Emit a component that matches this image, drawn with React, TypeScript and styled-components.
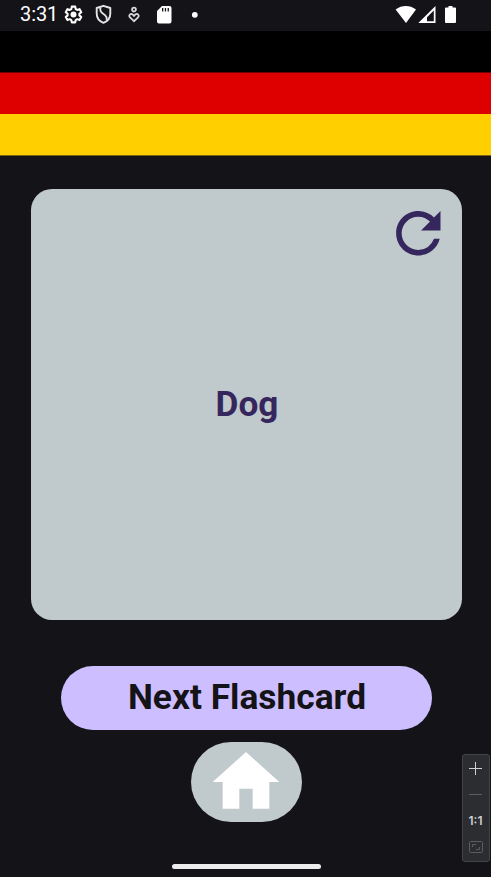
import React from "react";
import styled, { createGlobalStyle } from "styled-components";

const GlobalStyle = createGlobalStyle`
  * { box-sizing: border-box; }
  body { margin: 0; background: #141318; font-family: Roboto, sans-serif; }
  button { border: 0; padding: 0; font: inherit; }
  svg { display: block; flex: none; }
`;

const Screen = styled.main`
  position: relative;
  width: 491px;
  height: 877px;
  overflow: hidden;
  display: flex;
  flex-direction: column;
  align-items: center;
  background: #141318;
`;

const StatusBar = styled.header`
  width: 100%;
  height: 31px;
  padding: 0 34px 2px 20px;
  display: flex;
  align-items: center;
  color: #fff;
`;

const Clock = styled.time`
  width: 43px;
  font-size: 20px;
  line-height: 29px;
  letter-spacing: -0.1px;
`;

const Notifications = styled.div`
  display: grid;
  grid-template-columns: repeat(5, 30.4px);
  align-items: center;
`;

const Signals = styled.div`
  display: flex;
  align-items: center;
  margin-left: auto;
`;

const Flag = styled.div`
  width: 100%;
  height: 125px;
  flex: none;
  background: linear-gradient(#000 0 41.4px, #de0000 41.6px 83px, #ffcf00 83.2px 124.2px, #4e4112 124.6px);
`;

const Card = styled.section`
  position: relative;
  width: 431px;
  height: 431px;
  flex: none;
  margin: 33px 0 46px 2px;
  display: flex;
  align-items: center;
  justify-content: center;
  border-radius: 21px;
  background: #c0c9cb;
  color: #35275e;
`;

const Word = styled.h1`
  margin: 0;
  padding: 0 0 2px 1px;
  font-size: 35.2px;
  line-height: 42px;
  font-weight: 700;
`;

const FlipButton = styled.button`
  position: absolute;
  top: 10.5px;
  right: 10.5px;
  background: none;
  color: inherit;
`;

const NextButton = styled.button`
  width: 371px;
  height: 63.5px;
  flex: none;
  margin-left: 2px;
  padding: 0 0 2px 1px;
  border-radius: 32px;
  background: #cdbeff;
  color: #141318;
  font-size: 35.35px;
  line-height: 42px;
  font-weight: 700;
`;

const HomeButton = styled.button`
  width: 111px;
  height: 80px;
  flex: none;
  margin: 12.5px 0 0 2px;
  padding-right: 1px;
  display: flex;
  align-items: center;
  justify-content: center;
  border-radius: 40px;
  background: #c0c9cb;
  color: #fff;
`;

const GestureBar = styled.div`
  width: 149px;
  height: 5.5px;
  margin: auto 0 8px 2px;
  border-radius: 3px;
  background: #ececec;
`;

const ZoomPanel = styled.aside`
  position: absolute;
  right: 1px;
  top: 754px;
  width: 28px;
  height: 108px;
  padding-right: 1px;
  display: flex;
  flex-direction: column;
  align-items: center;
  border: 1px solid #434447;
  border-radius: 3px;
  background: #2b2d30;
  color: #ced0d6;
`;

const ZoomIn = styled.button`
  height: 27px;
  padding-bottom: 1px;
  background: none;
  color: inherit;
`;

const Divider = styled.div`
  width: 13px;
  height: 1px;
  margin: 12px 0 18px;
  background: #5b5d61;
`;

const Ratio = styled.span`
  font: 600 12px/16px Inter, sans-serif;
`;

const FitIcon = styled.svg`
  margin-top: 12px;
  color: #5b5d61;
`;

export default function App() {
  return (
    <>
      <GlobalStyle />
      <Screen>
        <StatusBar>
          <Clock>3:31</Clock>
          <Notifications>
            <svg width="21" height="21" viewBox="0 0 24 24" fill="none" stroke="currentColor" strokeWidth="2.3">
              <path d="M10 3h4l.5 2.8 1.7 1 2.7-1 2 3.5-2.2 1.8v1.9l2.2 1.8-2 3.5-2.7-1-1.7 1L14 21h-4l-.5-2.7-1.7-1-2.7 1-2-3.5L5.3 13v-1.9L3.1 9.3l2-3.5 2.7 1 1.7-1z" strokeLinejoin="round" />
              <circle cx="12" cy="12" r="3.4" fill="currentColor" stroke="none" />
            </svg>
            <svg width="21" height="21" viewBox="0 0 21 21" fill="none" stroke="#e4e4e5" strokeWidth="1.9">
              <path d="M10.5 1.8 17.3 4v5.5c0 4.5-2.7 7.8-6.8 9.4-4.1-1.6-6.8-4.9-6.8-9.4V4z" strokeLinejoin="round" />
              <path d="M7.4 3.4c-.8 3.2.2 4.6 2.8 6.3 3 2 4.3 3.3 3.4 6.3" />
            </svg>
            <svg width="20" height="20" viewBox="0 0 20 20" fill="none" stroke="#d8d8da" strokeWidth="1.8">
              <circle cx="10" cy="4.6" r="1.9" />
              <path d="m10 16.2-4-3.8c-2-2 .7-4.7 2.8-2.7L10 10.9l1.2-1.2c2.1-2 4.8.7 2.8 2.7z" />
            </svg>
            <svg width="20" height="20" viewBox="0 0 20 20" fill="currentColor">
              <path fillRule="evenodd" d="M8 1h7.5q2 0 2 2v13.5q0 2-2 2H5q-2 0-2-2V6zM8 3v3.5h1.3V3zm2.8 0v3.5h1.3V3zm2.8 0v3.5h1.3V3z" />
            </svg>
            <svg width="20" height="20" viewBox="0 0 20 20" fill="currentColor"><circle cx="9.8" cy="9.8" r="2.9" /></svg>
          </Notifications>
          <Signals>
            <svg width="62" height="20" viewBox="0 0 62 20" fill="currentColor">
              <path d="M.6 4.4C7-.2 14.6-.2 21 4.4L11 18z" />
              <path fillRule="evenodd" d="M23.3 18 40.5 1v17zM32 16.2h6.8V5.4L32 12.2z" />
              <path d="M53.5 1h4v1.5H60q1 0 1 1V17q0 1-1 1h-9q-1 0-1-1V3.5q0-1 1-1h2.5z" />
            </svg>
          </Signals>
        </StatusBar>
        <Flag />
        <Card>
          <Word>Dog</Word>
          <FlipButton aria-label="Flip card">
            <svg width="66.6" height="66.6" viewBox="0 0 24 24" fill="currentColor">
              <path d="M17.65 6.35A7.958 7.958 0 0 0 12 4c-4.42 0-7.99 3.58-7.99 8s3.57 8 7.99 8c3.73 0 6.84-2.55 7.73-6h-2.08A5.99 5.99 0 0 1 12 18c-3.31 0-6-2.69-6-6s2.69-6 6-6c1.66 0 3.14.69 4.22 1.78L13 11h7V4z" />
            </svg>
          </FlipButton>
        </Card>
        <NextButton>Next Flashcard</NextButton>
        <HomeButton aria-label="Home">
          <svg width="80" height="80" viewBox="0 0 24 24" fill="currentColor">
            <path d="M10 20v-6h4v6h5v-8h3L12 3 2 12h3v8z" />
          </svg>
        </HomeButton>
        <GestureBar />
        <ZoomPanel>
          <ZoomIn aria-label="Zoom in">
            <svg width="13" height="13" viewBox="0 0 13 13" stroke="currentColor"><path d="M6.5 0v13M0 6.5h13" /></svg>
          </ZoomIn>
          <Divider />
          <Ratio>1:1</Ratio>
          <FitIcon width="14" height="12" viewBox="0 0 14 12" fill="none" stroke="currentColor">
            <rect x=".5" y=".5" width="13" height="11" rx="1" />
            <path d="M3.5 6V3.5H7M7 8.5h3.5V6" />
          </FitIcon>
        </ZoomPanel>
      </Screen>
    </>
  );
}
